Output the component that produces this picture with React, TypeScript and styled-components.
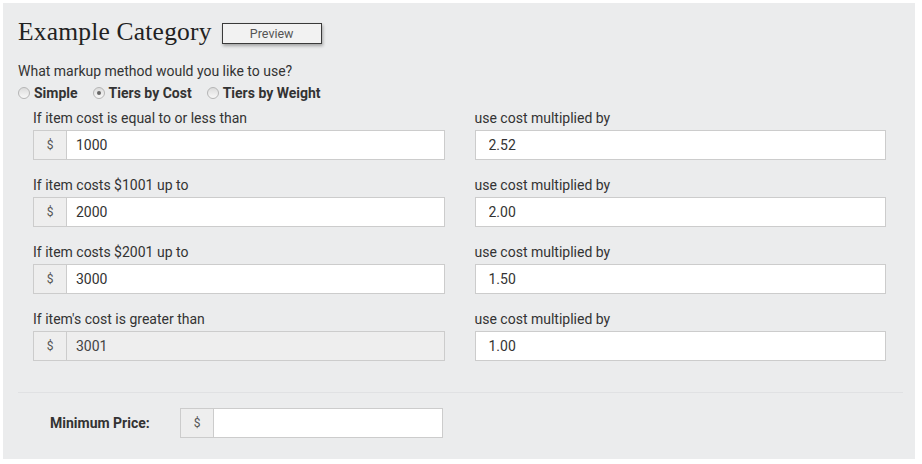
import React from "react";
import styled, { createGlobalStyle } from "styled-components";

const GlobalStyle = createGlobalStyle`
  html, body {
    margin: 0;
    padding: 0;
    background: #ffffff;
  }
  body {
    font-family: Roboto, "Liberation Sans", Arial, sans-serif;
    color: #333333;
  }
`;

const Panel = styled.div`
  margin: 3px;
  width: 912px;
  height: 456px;
  box-sizing: border-box;
  background: #ebeced;
  padding: 11px 12px 0 15px;
  display: flex;
  flex-direction: column;
`;

const Header = styled.div`
  display: flex;
  align-items: center;
  gap: 10px;
  height: 36px;
`;

const Title = styled.h1`
  margin: 0;
  font-family: "Liberation Serif", "Times New Roman", serif;
  font-weight: normal;
  font-size: 25.5px;
  line-height: 36px;
  color: #222222;
  letter-spacing: 0.2px;
`;

const PreviewButton = styled.button`
  width: 100px;
  height: 21px;
  margin-top: 3px;
  border: 1px solid #3a3a3a;
  background: #f2f2f2;
  box-shadow: 1px 2px 3px rgba(0, 0, 0, 0.3);
  font-family: Roboto, "Liberation Sans", Arial, sans-serif;
  font-size: 12.5px;
  color: #555555;
  padding: 0;
  cursor: pointer;
`;

const Question = styled.p`
  margin: 11px 0 0;
  font-size: 14px;
  line-height: 20px;
  color: #333333;
`;

const RadioRow = styled.div`
  display: flex;
  align-items: center;
  gap: 15px;
  height: 20px;
  margin-top: 2px;
`;

const RadioLabel = styled.label`
  display: flex;
  align-items: center;
  gap: 4px;
  font-size: 14px;
  font-weight: bold;
  color: #333333;
`;

const Radio = styled.input.attrs({ type: "radio" })`
  appearance: none;
  margin: 0;
  width: 12px;
  height: 12px;
  border-radius: 50%;
  border: 1px solid #b5b5b5;
  background: linear-gradient(#dcdcdc, #f8f8f8);
  position: relative;
  &:checked::after {
    content: "";
    position: absolute;
    left: 3px;
    top: 3px;
    width: 4px;
    height: 4px;
    border-radius: 50%;
    background: #666666;
  }
`;

const Grid = styled.div`
  display: grid;
  grid-template-columns: 1fr 1fr;
  column-gap: 30px;
  row-gap: 15px;
  padding: 0 17px 0 15px;
  margin-top: 5px;
  margin-bottom: 31px;
`;

const Field = styled.div`
  display: flex;
  flex-direction: column;
  gap: 2px;
`;

const FieldLabel = styled.span`
  font-size: 14px;
  line-height: 20px;
  color: #333333;
`;

const InputGroup = styled.div<{ $width?: number }>`
  display: flex;
  height: 30px;
  width: ${({ $width }) => ($width ? `${$width}px` : "auto")};
`;

const Addon = styled.span`
  width: 33px;
  box-sizing: border-box;
  display: flex;
  align-items: center;
  justify-content: center;
  background: #eeeeee;
  border: 1px solid #cccccc;
  border-right: none;
  font-size: 12px;
  color: #555555;
`;

const TextInput = styled.input<{ $afterAddon?: boolean }>`
  flex: 1;
  min-width: 0;
  box-sizing: border-box;
  height: 30px;
  border: 1px solid #cccccc;
  background: #ffffff;
  padding: 0 12px 0 ${({ $afterAddon }) => ($afterAddon ? "9px" : "13px")};
  font-family: Roboto, "Liberation Sans", Arial, sans-serif;
  font-size: 14px;
  color: #333333;
  outline: none;
  &:disabled {
    background: #eeeeee;
    color: #444444;
  }
`;

const Footer = styled.div`
  border-top: 1px solid #e0e1e3;
  padding: 15px 0 0 32px;
  display: flex;
  align-items: center;
`;

const FooterLabel = styled.span`
  width: 130px;
  font-size: 14px;
  font-weight: bold;
  color: #333333;
`;

const tiers = [
  { label: "If item cost is equal to or less than", cost: "1000", factor: "2.52" },
  { label: "If item costs $1001 up to", cost: "2000", factor: "2.00" },
  { label: "If item costs $2001 up to", cost: "3000", factor: "1.50" },
  { label: "If item's cost is greater than", cost: "3001", factor: "1.00", locked: true },
];

export default function App() {
  return (
    <>
      <GlobalStyle />
      <Panel>
        <Header>
          <Title>Example Category</Title>
          <PreviewButton>Preview</PreviewButton>
        </Header>
        <Question>What markup method would you like to use?</Question>
        <RadioRow>
          <RadioLabel>
            <Radio name="method" />
            Simple
          </RadioLabel>
          <RadioLabel>
            <Radio name="method" defaultChecked />
            Tiers by Cost
          </RadioLabel>
          <RadioLabel>
            <Radio name="method" />
            Tiers by Weight
          </RadioLabel>
        </RadioRow>
        <Grid>
          {tiers.map((t) => (
            <React.Fragment key={t.label}>
              <Field>
                <FieldLabel>{t.label}</FieldLabel>
                <InputGroup>
                  <Addon>$</Addon>
                  <TextInput $afterAddon defaultValue={t.cost} disabled={t.locked} />
                </InputGroup>
              </Field>
              <Field>
                <FieldLabel>use cost multiplied by</FieldLabel>
                <InputGroup>
                  <TextInput defaultValue={t.factor} />
                </InputGroup>
              </Field>
            </React.Fragment>
          ))}
        </Grid>
        <Footer>
          <FooterLabel>Minimum Price:</FooterLabel>
          <InputGroup $width={263}>
            <Addon>$</Addon>
            <TextInput $afterAddon />
          </InputGroup>
        </Footer>
      </Panel>
    </>
  );
}
